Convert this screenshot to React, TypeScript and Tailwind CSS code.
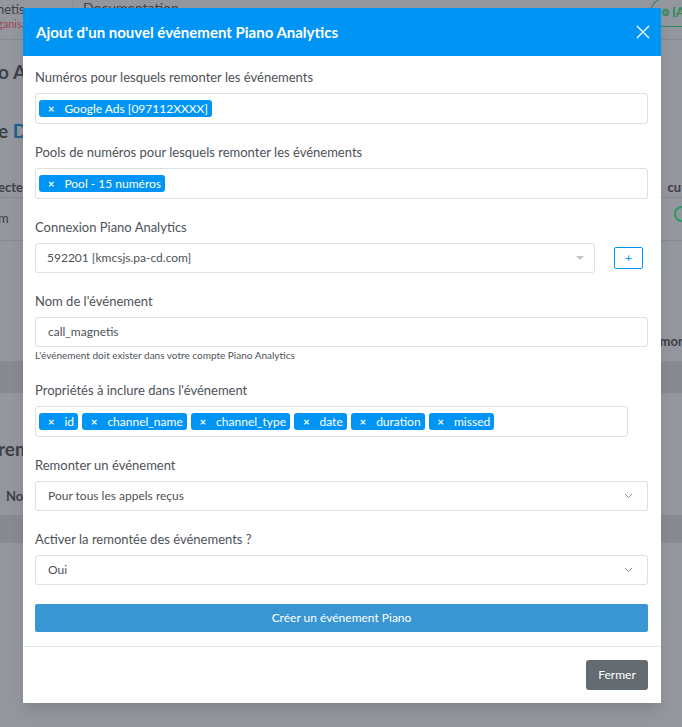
import React from "react";

const Tag = ({ label }: { label: string }) => (
  <span className="inline-flex h-[17px] items-center rounded-[3px] bg-[#0094f5] text-[12px] leading-none text-white">
    <span className="pl-[9px] pr-[10px] text-[11px] font-bold">×</span>
    <span className="pr-[4px]">{label}</span>
  </span>
);

const Label = ({ children }: { children: React.ReactNode }) => (
  <div className="mb-[7px] h-[18px] text-[13px] leading-[18px] text-[#4d5258]">{children}</div>
);

const Chevron = () => (
  <svg width="9" height="6" viewBox="0 0 9 6" className="text-[#8a8f96]">
    <path d="M1 1l3.5 3.5L8 1" fill="none" stroke="currentColor" strokeWidth="1" />
  </svg>
);

export default function App() {
  return (
    <div
      className="relative h-[727px] w-[682px] overflow-hidden bg-[#93969d]"
      style={{ fontFamily: "Lato, 'Open Sans', sans-serif" }}
    >
      {/* dimmed page underneath */}
      <div className="flex h-[40px] border-b border-[#868990]">
        <div className="w-[73px] border-r border-[#8a8d94] pl-0 leading-none">
          <div className="-ml-[3px] pt-[3px] text-[13px] text-[#3d4046]">netis</div>
          <div className="-ml-[3px] pt-[2px] text-[11px] text-[#a2454f]">ganisa</div>
        </div>
        <div className="pl-[10px] pt-[1px] text-[14px] leading-none text-[#3d4046]">Documentation</div>
        <div className="ml-auto mt-[-2px] flex h-[29px] w-[32px] items-center gap-[2px] rounded-l-full border border-r-0 border-[#2e8a5a] pl-[10px] text-[13px] font-bold text-[#2e8a5a]">
          <span className="text-[10px]">⚙</span>
          <span>IA</span>
        </div>
      </div>
      <div className="pl-0 pt-[22px] text-[19px] font-bold leading-none text-[#3d4046]">
        <span className="-ml-[2px]">o A</span>
      </div>
      <div className="pt-[40px] text-[19px] font-bold leading-none text-[#3d4046]">
        <span className="-ml-[2px]">e </span>
        <span className="text-[#1c5e8e]">D</span>
      </div>
      <div className="mt-[38px] flex h-[20px] items-start border-b border-[#868990] text-[13px] font-bold text-[#3d4046]">
        <span className="-ml-[2px]">ecte</span>
        <span className="ml-auto mr-[-4px]">cut</span>
      </div>
      <div className="flex h-[43px] items-start border-b border-[#868990] pt-[11px] text-[13px] text-[#3d4046]">
        <span className="-ml-[2px]">m</span>
        <span className="ml-auto mr-[-8px] mt-[-3px] h-[16px] w-[16px] rounded-full border-2 border-[#2e9a5e]" />
      </div>
      <div className="flex h-[120px] items-end pb-[10px] text-[13px] font-bold text-[#3d4046]">
        <span className="ml-auto mr-[-8px]">mont</span>
      </div>
      <div className="h-[32px] bg-[#878a91]" />
      <div className="pt-[46px] text-[19px] font-bold leading-none text-[#3d4046]">
        <span className="-ml-[2px]">rem</span>
      </div>
      <div className="pl-[6px] pt-[32px] text-[13px] font-bold leading-none text-[#3d4046]">Nor</div>
      <div className="mt-[12px] h-[28px] bg-[#878a91]" />

      {/* modal */}
      <div className="absolute left-[23px] top-[8px] w-[638px] bg-white shadow-lg">
        <div className="flex h-[48px] items-center justify-between bg-[#0094f5] pl-[13px] pr-[11px]">
          <div className="text-[15px] font-bold text-white">Ajout d'un nouvel événement Piano Analytics</div>
          <svg width="14" height="14" viewBox="0 0 14 14">
            <path d="M1 1l12 12M13 1L1 13" stroke="white" strokeWidth="1.4" />
          </svg>
        </div>

        <div className="pb-[14px] pl-[12px] pr-[13px] pt-[12px]">
          <div className="mb-[19px]">
            <Label>Numéros pour lesquels remonter les événements</Label>
            <div className="flex h-[31px] items-center rounded-[3px] border border-[#dcdfe4] pl-[3px]">
              <Tag label="Google Ads [097112XXXX]" />
            </div>
          </div>

          <div className="mb-[19px]">
            <Label>Pools de numéros pour lesquels remonter les événements</Label>
            <div className="flex h-[31px] items-center rounded-[3px] border border-[#dcdfe4] pl-[3px]">
              <Tag label="Pool - 15 numéros" />
            </div>
          </div>

          <div className="mb-[19px]">
            <Label>Connexion Piano Analytics</Label>
            <div className="flex items-center">
              <div className="flex h-[30px] w-[560px] items-center justify-between rounded-[3px] border border-[#dcdfe4] pl-[11px] pr-[10px] text-[12px] text-[#4d5258]">
                <span>592201 [kmcsjs.pa-cd.com]</span>
                <span className="h-0 w-0 border-x-[4px] border-t-[4px] border-x-transparent border-t-[#c4c7cc]" />
              </div>
              <div className="ml-[19px] flex h-[22px] w-[29px] items-center justify-center rounded-[2px] border border-[#0094f5] text-[12px] leading-none text-[#0094f5]">
                +
              </div>
            </div>
          </div>

          <div className="mb-[19px]">
            <Label>Nom de l'événement</Label>
            <div className="flex h-[30px] items-center rounded-[3px] border border-[#dcdfe4] pl-[12px] text-[12px] text-[#4d5258]">
              call_magnetis
            </div>
            <div className="mt-[2px] text-[10px] leading-[13px] text-[#4d5258]">
              L'événement doit exister dans votre compte Piano Analytics
            </div>
          </div>

          <div className="mb-[19px]">
            <Label>Propriétés à inclure dans l'événement</Label>
            <div className="flex h-[31px] w-[593px] items-center gap-[4px] rounded-[3px] border border-[#dcdfe4] pl-[3px]">
              <Tag label="id" />
              <Tag label="channel_name" />
              <Tag label="channel_type" />
              <Tag label="date" />
              <Tag label="duration" />
              <Tag label="missed" />
            </div>
          </div>

          <div className="mb-[19px]">
            <Label>Remonter un événement</Label>
            <div className="flex h-[30px] items-center justify-between rounded-[3px] border border-[#dcdfe4] pl-[12px] pr-[14px] text-[12px] text-[#4d5258]">
              <span>Pour tous les appels reçus</span>
              <Chevron />
            </div>
          </div>

          <div className="mb-[19px]">
            <Label>Activer la remontée des événements ?</Label>
            <div className="flex h-[30px] items-center justify-between rounded-[3px] border border-[#dcdfe4] pl-[12px] pr-[14px] text-[12px] text-[#4d5258]">
              <span>Oui</span>
              <Chevron />
            </div>
          </div>

          <div className="flex h-[28px] items-center justify-center rounded-[2px] bg-[#3996d3] text-[12px] text-white">
            Créer un événement Piano
          </div>
        </div>

        <div className="flex justify-end border-t border-[#e3e6ea] pb-[13px] pr-[13px] pt-[13px]">
          <div className="flex h-[30px] w-[62px] items-center justify-center rounded-[3px] bg-[#636b71] text-[12px] text-white">
            Fermer
          </div>
        </div>
      </div>
    </div>
  );
}
